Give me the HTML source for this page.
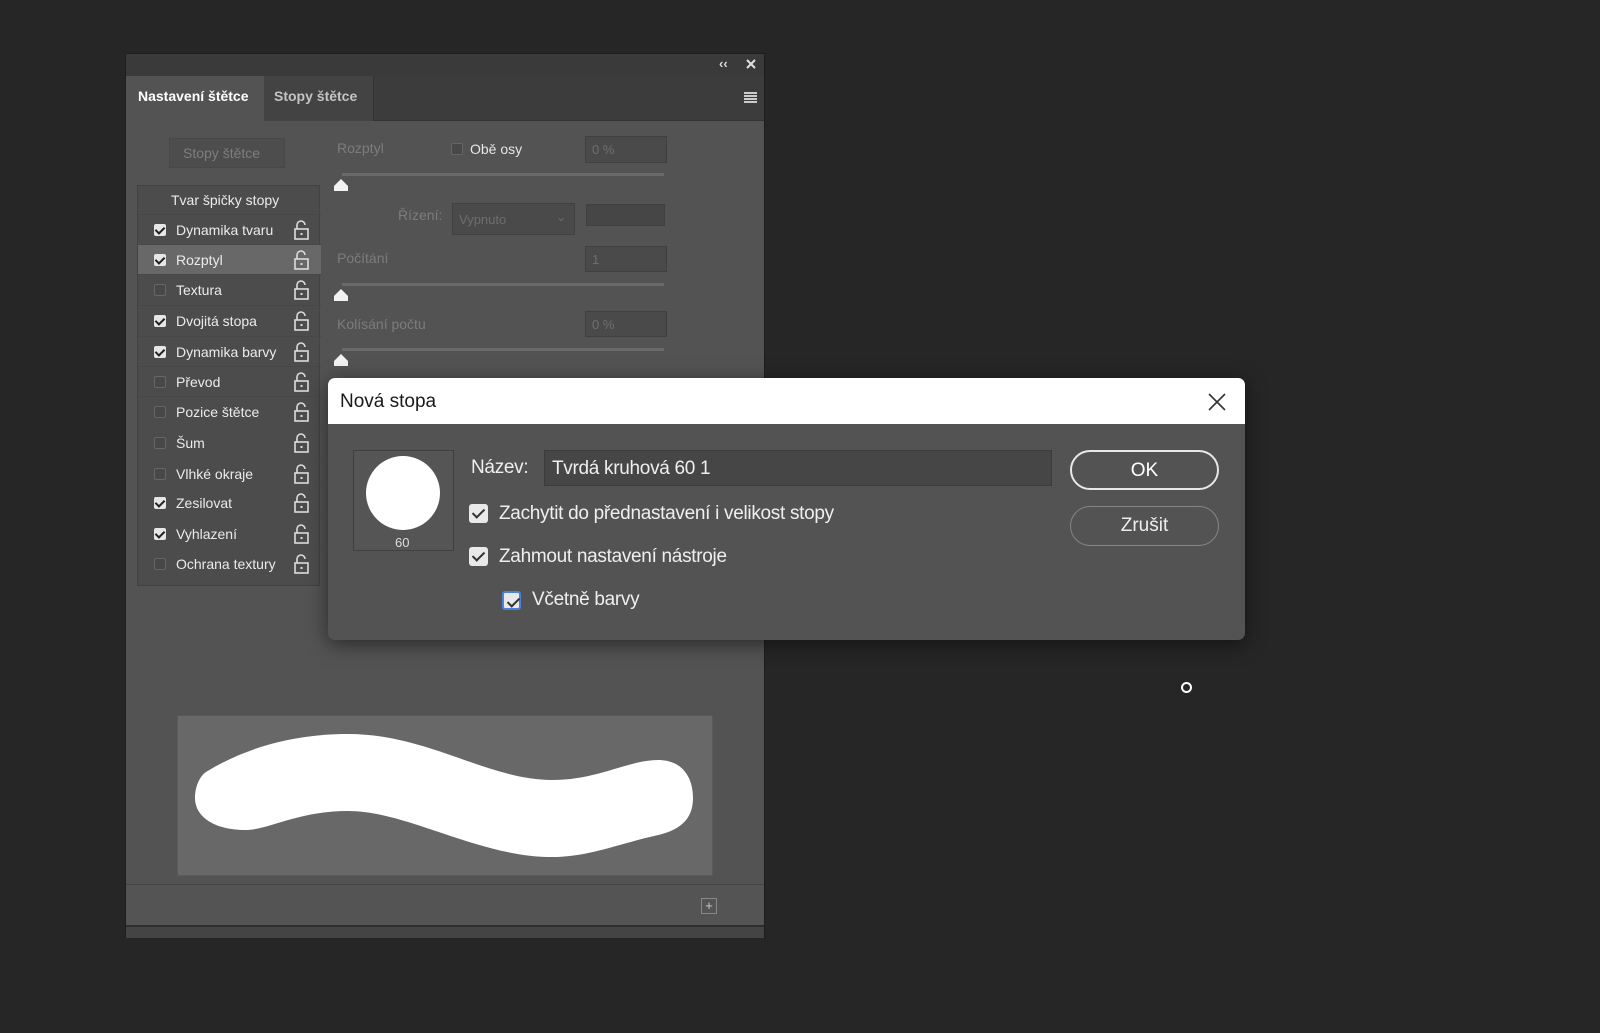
<!DOCTYPE html>
<html><head><meta charset="utf-8">
<style>
*{margin:0;padding:0;box-sizing:border-box}
body{width:1600px;height:1033px;background:#262626;position:relative;overflow:hidden;font-family:"Liberation Sans",sans-serif}
.a{position:absolute}
.panel{left:125px;top:53px;width:640px;height:885px;background:#535353;border:1px solid #1e1e1e}
.t{position:absolute;white-space:nowrap}
.cb{position:absolute;width:12px;height:12px;border-radius:2px}
.cb.on{background:#e6e6e6}
.cb.on:after{content:"";position:absolute;left:3px;top:1px;width:4px;height:7px;border:solid #222;border-width:0 2px 2px 0;transform:rotate(45deg)}
.cb.off{border:1px solid #666;background:#484848}
.row{position:absolute;left:0;width:183px;height:30px;border-top:1px solid #474747}
.row .t{left:38px;top:7px;font-size:14px;color:#ebebeb}
.row .cb{left:16px;top:9px}
.inp{position:absolute;background:#4a4a4a;border:1px solid #404040;color:#6f6f6f;font-size:13px;padding:5px 6px}
.track{position:absolute;left:341px;width:322px;height:3px;background:#6a6a6a}
.lbl{color:#7c7c7c;font-size:14px}
.dcb{position:absolute;width:19px;height:19px;border-radius:3px;background:#e9e9e9}
.dcb:after{content:"";position:absolute;left:6px;top:2px;width:5px;height:10px;border:solid #333;border-width:0 2.5px 2.5px 0;transform:rotate(45deg)}
.dt{position:absolute;font-size:19px;color:#efefef;white-space:nowrap;letter-spacing:-0.3px}
</style></head><body>

<div class="a panel">
  <div class="a" style="left:0;top:0;width:638px;height:22px;background:#3a3a3a"></div>
  <div class="t" style="left:593px;top:2px;color:#ddd;font-size:13px;font-weight:bold">‹‹</div>
  <svg class="a" style="left:619px;top:4px" width="12" height="12"><path d="M2 2L10 10M10 2L2 10" stroke="#e0e0e0" stroke-width="2"/></svg>
  <div class="a" style="left:0;top:22px;width:638px;height:45px;background:#3c3c3c;border-bottom:1px solid #333"></div>
  <div class="a" style="left:0;top:22px;width:138px;height:46px;background:#535353"></div>
  <div class="a" style="left:138px;top:22px;width:110px;height:45px;background:#434343;border-right:1px solid #333"></div>
  <div class="t" style="left:12px;top:34px;font-size:14px;color:#fff;font-weight:bold">Nastavení štětce</div>
  <div class="t" style="left:148px;top:34px;font-size:14px;color:#c4c4c4;font-weight:bold">Stopy štětce</div>
  <div class="a" style="left:618px;top:38px;width:13px;height:2px;background:#ccc;box-shadow:0 3px #ccc,0 6px #ccc,0 9px #ccc"></div>

  <div class="a" style="left:43px;top:84px;width:116px;height:30px;background:#4d4d4d;border:1px solid #484848"></div>
  <div class="t" style="left:57px;top:91px;font-size:14px;color:#7d7d7d">Stopy štětce</div>

  <div class="a" style="left:11px;top:131px;width:183px;height:401px;background:#4c4c4c;border:1px solid #424242">
    <div class="t" style="left:33px;top:6px;font-size:14px;color:#ebebeb">Tvar špičky stopy</div>
    <div class="row" style="top:28px"><div class="cb on"></div><div class="t">Dynamika tvaru</div></div>
    <div class="row" style="top:58px;background:#686868"><div class="cb on"></div><div class="t">Rozptyl</div></div>
    <div class="row" style="top:88px"><div class="cb off"></div><div class="t">Textura</div></div>
    <div class="row" style="top:119px"><div class="cb on"></div><div class="t">Dvojitá stopa</div></div>
    <div class="row" style="top:150px"><div class="cb on"></div><div class="t">Dynamika barvy</div></div>
    <div class="row" style="top:180px"><div class="cb off"></div><div class="t">Převod</div></div>
    <div class="row" style="top:210px"><div class="cb off"></div><div class="t">Pozice štětce</div></div>
    <div class="row" style="top:241px;border-top-color:#4c4c4c"><div class="cb off"></div><div class="t">Šum</div></div>
    <div class="row" style="top:272px;border-top-color:#4c4c4c"><div class="cb off"></div><div class="t">Vlhké okraje</div></div>
    <div class="row" style="top:301px;border-top-color:#4c4c4c"><div class="cb on"></div><div class="t">Zesilovat</div></div>
    <div class="row" style="top:332px;border-top-color:#4c4c4c"><div class="cb on"></div><div class="t">Vyhlazení</div></div>
    <div class="row" style="top:362px;border-top-color:#4c4c4c"><div class="cb off"></div><div class="t">Ochrana textury</div></div>
  </div>

  <div class="t lbl" style="left:211px;top:86px">Rozptyl</div>
  <div class="cb off" style="left:325px;top:89px"></div>
  <div class="t" style="left:344px;top:87px;font-size:14px;color:#e6e6e6">Obě osy</div>
  <div class="inp" style="left:459px;top:82px;width:82px;height:27px">0 %</div>
  <div class="track" style="left:216px;top:119px"></div>
  <svg class="a" style="left:207px;top:124px" width="16" height="14"><path d="M8 1L15 8V13H1V8Z" fill="#f2f2f2"/></svg>

  <div class="t lbl" style="left:272px;top:153px">Řízení:</div>
  <div class="inp" style="left:326px;top:149px;width:123px;height:32px;color:#6d6d6d;padding-top:8px">Vypnuto<span style="position:absolute;right:8px;top:6px;font-size:12px">⌄</span></div>
  <div class="inp" style="left:460px;top:150px;width:79px;height:22px;background:#464646"></div>

  <div class="t lbl" style="left:211px;top:196px">Počítání</div>
  <div class="inp" style="left:459px;top:192px;width:82px;height:26px">1</div>
  <div class="track" style="left:216px;top:229px"></div>
  <svg class="a" style="left:207px;top:234px" width="16" height="14"><path d="M8 1L15 8V13H1V8Z" fill="#f2f2f2"/></svg>

  <div class="t lbl" style="left:211px;top:262px">Kolísání počtu</div>
  <div class="inp" style="left:459px;top:257px;width:82px;height:26px">0 %</div>
  <div class="track" style="left:216px;top:294px"></div>
  <svg class="a" style="left:207px;top:299px" width="16" height="14"><path d="M8 1L15 8V13H1V8Z" fill="#f2f2f2"/></svg>

  <div class="a" style="left:51px;top:661px;width:536px;height:161px;background:#686868;border:1px solid #5a5a5a">
    <svg width="534" height="159" style="position:absolute;left:0;top:0"><path d="M28 56 C70 30 120 18 170 18 C250 18 310 64 374 64 C420 64 450 44 480 44 C505 44 515 62 515 82 C515 105 500 115 476 120 C440 128 410 141 374 141 C300 141 230 95 170 95 C120 95 90 114 68 114 C35 114 17 100 17 82 C17 70 22 60 28 56 Z" fill="#fff"/></svg>
  </div>
  <div class="a" style="left:0;top:830px;width:638px;height:1px;background:#444"></div>
  <div class="a" style="left:0;top:831px;width:638px;height:41px;background:#545454"></div>
  <div class="a" style="left:575px;top:844px;width:16px;height:16px;border:1px solid #888;color:#ccc;font-size:13px;line-height:13px;text-align:center">+</div>
  <div class="a" style="left:0;top:871px;width:638px;height:2px;background:#2e2e2e"></div>
  <div class="a" style="left:0;top:873px;width:638px;height:11px;background:#444"></div>
</div>

<!-- lock icons -->
<svg class="a" style="left:293px;top:220px" width="18" height="360">
<g fill="none" stroke="#dcdcdc" stroke-width="1.6">
<g id="lk"><path d="M4 9V5a4 4 0 0 1 8 0"/><rect x="2" y="9" width="13" height="10"/><rect x="7.5" y="13" width="2" height="2" fill="#dcdcdc" stroke="none"/></g>
<use href="#lk" y="30"/><use href="#lk" y="60"/><use href="#lk" y="91"/><use href="#lk" y="122"/><use href="#lk" y="152"/><use href="#lk" y="182"/><use href="#lk" y="213"/><use href="#lk" y="244"/><use href="#lk" y="273"/><use href="#lk" y="304"/><use href="#lk" y="334"/>
</g></svg>

<!-- Dialog -->
<div class="a" style="left:328px;top:378px;width:917px;height:262px;background:#535353;border-radius:7px;overflow:hidden;box-shadow:0 4px 20px rgba(0,0,0,.5)">
  <div class="a" style="left:0;top:0;width:917px;height:46px;background:#fff"></div>
  <div class="t" style="left:12px;top:13px;font-size:19px;color:#1a1a1a">Nová stopa</div>
  <svg class="a" style="left:880px;top:15px" width="18" height="18"><path d="M1 1L17 17M17 1L1 17" stroke="#333" stroke-width="1.6"/></svg>
  <div class="a" style="left:25px;top:72px;width:101px;height:101px;border:1px solid #404040;background:#555"></div>
  <div class="a" style="left:38px;top:78px;width:74px;height:74px;border-radius:50%;background:#fff"></div>
  <div class="t" style="left:67px;top:157px;font-size:13px;color:#ddd">60</div>
  <div class="dt" style="left:143px;top:79px">Název:</div>
  <div class="a" style="left:216px;top:72px;width:508px;height:36px;background:#464646;border:1px solid #3c3c3c"></div>
  <div class="dt" style="left:224px;top:80px">Tvrdá kruhová 60 1</div>
  <div class="dcb" style="left:141px;top:126px"></div>
  <div class="dt" style="left:171px;top:125px">Zachytit do přednastavení i velikost stopy</div>
  <div class="dcb" style="left:141px;top:169px"></div>
  <div class="dt" style="left:171px;top:168px">Zahmout nastavení nástroje</div>
  <div class="dcb" style="left:174px;top:213px;border:2px solid #4a84d8"></div>
  <div class="dt" style="left:204px;top:211px">Včetně barvy</div>
  <div class="a" style="left:742px;top:72px;width:149px;height:40px;border:2px solid #e8e8e8;border-radius:20px;color:#fff;font-size:19px;text-align:center;line-height:37px">OK</div>
  <div class="a" style="left:742px;top:128px;width:149px;height:40px;border:1.5px solid #858585;border-radius:20px;color:#eee;font-size:19px;text-align:center;line-height:38px">Zrušit</div>
</div>

<div class="a" style="left:1181px;top:682px;width:11px;height:11px;border:2.5px solid #fff;border-radius:50%"></div>
</body></html>
